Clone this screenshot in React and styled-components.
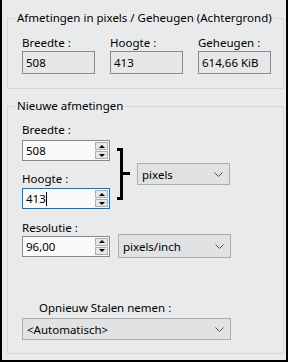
import styled, { createGlobalStyle } from "styled-components";

const GlobalStyle = createGlobalStyle`
  body {
    margin: 0;
    background: #e9eaeb;
    font-family: "Noto Sans", "Open Sans", sans-serif;
    font-size: 11.5px;
    color: #000;
  }
`

const Window = styled.div`
  width: 288px;
  height: 362px;
  box-sizing: border-box;
  background: #e9eaeb;
  border: 2px solid #000;
  border-top: none;
  padding: 10px 2px 0 5px;
  display: flex;
  flex-direction: column;
  gap: 9px;
`

const Group = styled.fieldset`
  margin: 0;
  padding: 0;
  min-width: 0;
  border: 1px solid #d6d6d6;
`

const Legend = styled.legend`
  margin-left: 7px;
  padding: 0 2px;
  line-height: 16px;
`

const GroupBody = styled.div`
  padding: ${p => p.$pad};
  display: flex;
  flex-direction: column;
`

const ReadRow = styled.div`
  display: flex;
  gap: 15px;
`

const Field = styled.div`
  display: flex;
  flex-direction: column;
`

const Label = styled.div`
  line-height: 16px;
  margin-bottom: ${p => p.$gap || 0}px;
  padding-left: ${p => p.$indent || 0}px;
`

const ReadBox = styled.div`
  width: 73px;
  height: 23px;
  box-sizing: border-box;
  border: 1px solid #8a8a8a;
  background: #e6e7e8;
  padding-left: 3px;
  line-height: 21px;
`

const Edit = styled.div`
  width: 88px;
  height: 21px;
  box-sizing: border-box;
  border: 1px solid ${p => (p.$focus ? "#0078d7" : "#8a8a8a")};
  background: #fafafa;
  padding-left: 3px;
  display: flex;
  align-items: center;
  justify-content: space-between;
`

const Caret = styled.span`
  display: inline-block;
  width: 1px;
  height: 14px;
  background: #000;
  vertical-align: -3px;
`

const Spin = styled.div`
  display: flex;
  flex-direction: column;
  gap: 1px;
  margin-right: 1px;
`

const SpinButton = styled.div`
  width: 13px;
  height: 8px;
  box-sizing: border-box;
  border: 1px solid #acacac;
  background: #e7e7e7;
  display: flex;
  align-items: center;
  justify-content: center;

  &::after {
    content: "";
    border-left: 3px solid transparent;
    border-right: 3px solid transparent;
    ${p => (p.$down ? "border-top: 3px solid #000;" : "border-bottom: 3px solid #000;")}
  }
`

const SizeRow = styled.div`
  display: flex;
  align-items: flex-start;
`

const SizeFields = styled.div`
  display: flex;
  flex-direction: column;
  gap: 10px;
`

const Bracket = styled.div`
  width: 3px;
  height: 46px;
  margin-left: 7px;
  margin-top: 26px;
  border: 3px solid #000;
  border-left: none;
`

const Tick = styled.div`
  width: 7px;
  height: 3px;
  background: #000;
  margin-top: 50px;
  margin-right: 7px;
`

const Select = styled.div`
  width: ${p => p.$w}px;
  height: ${p => p.$h || 23}px;
  margin-left: ${p => p.$ml || 0}px;
  margin-top: ${p => p.$mt || 0}px;
  box-sizing: border-box;
  border: 1px solid #adadad;
  background: #e1e2e3;
  padding: 0 6px 0 4px;
  display: flex;
  align-items: center;
  justify-content: space-between;
`

const ResRow = styled.div`
  display: flex;
  align-items: center;
`

const Spacer = styled.div`
  height: ${p => p.$h}px;
`

const Chevron = () => (
  <svg width="9" height="5" viewBox="0 0 9 5">
    <polyline points="0.5,0.5 4.5,4.5 8.5,0.5" fill="none" stroke="#555" strokeWidth="1" />
  </svg>
)

const SpinBox = ({ value, focus }) => (
  <Edit $focus={focus}>
    <span>{value}{focus && <Caret />}</span>
    <Spin>
      <SpinButton />
      <SpinButton $down />
    </Spin>
  </Edit>
)

export default function App() {
  return (
    <>
      <GlobalStyle />
      <Window>
        <Group>
          <Legend>Afmetingen in pixels / Geheugen (Achtergrond)</Legend>
          <GroupBody $pad="9px 0 14px 14px">
            <ReadRow>
              <Field>
                <Label>Breedte :</Label>
                <ReadBox>508</ReadBox>
              </Field>
              <Field>
                <Label>Hoogte :</Label>
                <ReadBox>413</ReadBox>
              </Field>
              <Field>
                <Label>Geheugen :</Label>
                <ReadBox>614,66 KiB</ReadBox>
              </Field>
            </ReadRow>
          </GroupBody>
        </Group>

        <Group>
          <Legend>Nieuwe afmetingen</Legend>
          <GroupBody $pad="8px 0 13px 14px">
            <SizeRow>
              <SizeFields>
                <Field>
                  <Label $gap={2}>Breedte :</Label>
                  <SpinBox value="508" />
                </Field>
                <Field>
                  <Label $gap={1}>Hoogte :</Label>
                  <SpinBox value="413" focus />
                </Field>
              </SizeFields>
              <Bracket />
              <Tick />
              <Select $w={93} $h={22} $mt={41}>
                pixels
                <Chevron />
              </Select>
            </SizeRow>
            <Spacer $h={11} />
            <Label $gap={-2}>Resolutie :</Label>
            <ResRow>
              <SpinBox value="96,00" />
              <Select $w={113} $h={24} $ml={8}>
                pixels/inch
                <Chevron />
              </Select>
            </ResRow>
            <Spacer $h={42} />
            <Label $gap={2} $indent={17}>Opnieuw Stalen nemen :</Label>
            <Select $w={209} $h={22}>
              &lt;Automatisch&gt;
              <Chevron />
            </Select>
          </GroupBody>
        </Group>
      </Window>
    </>
  )
}
